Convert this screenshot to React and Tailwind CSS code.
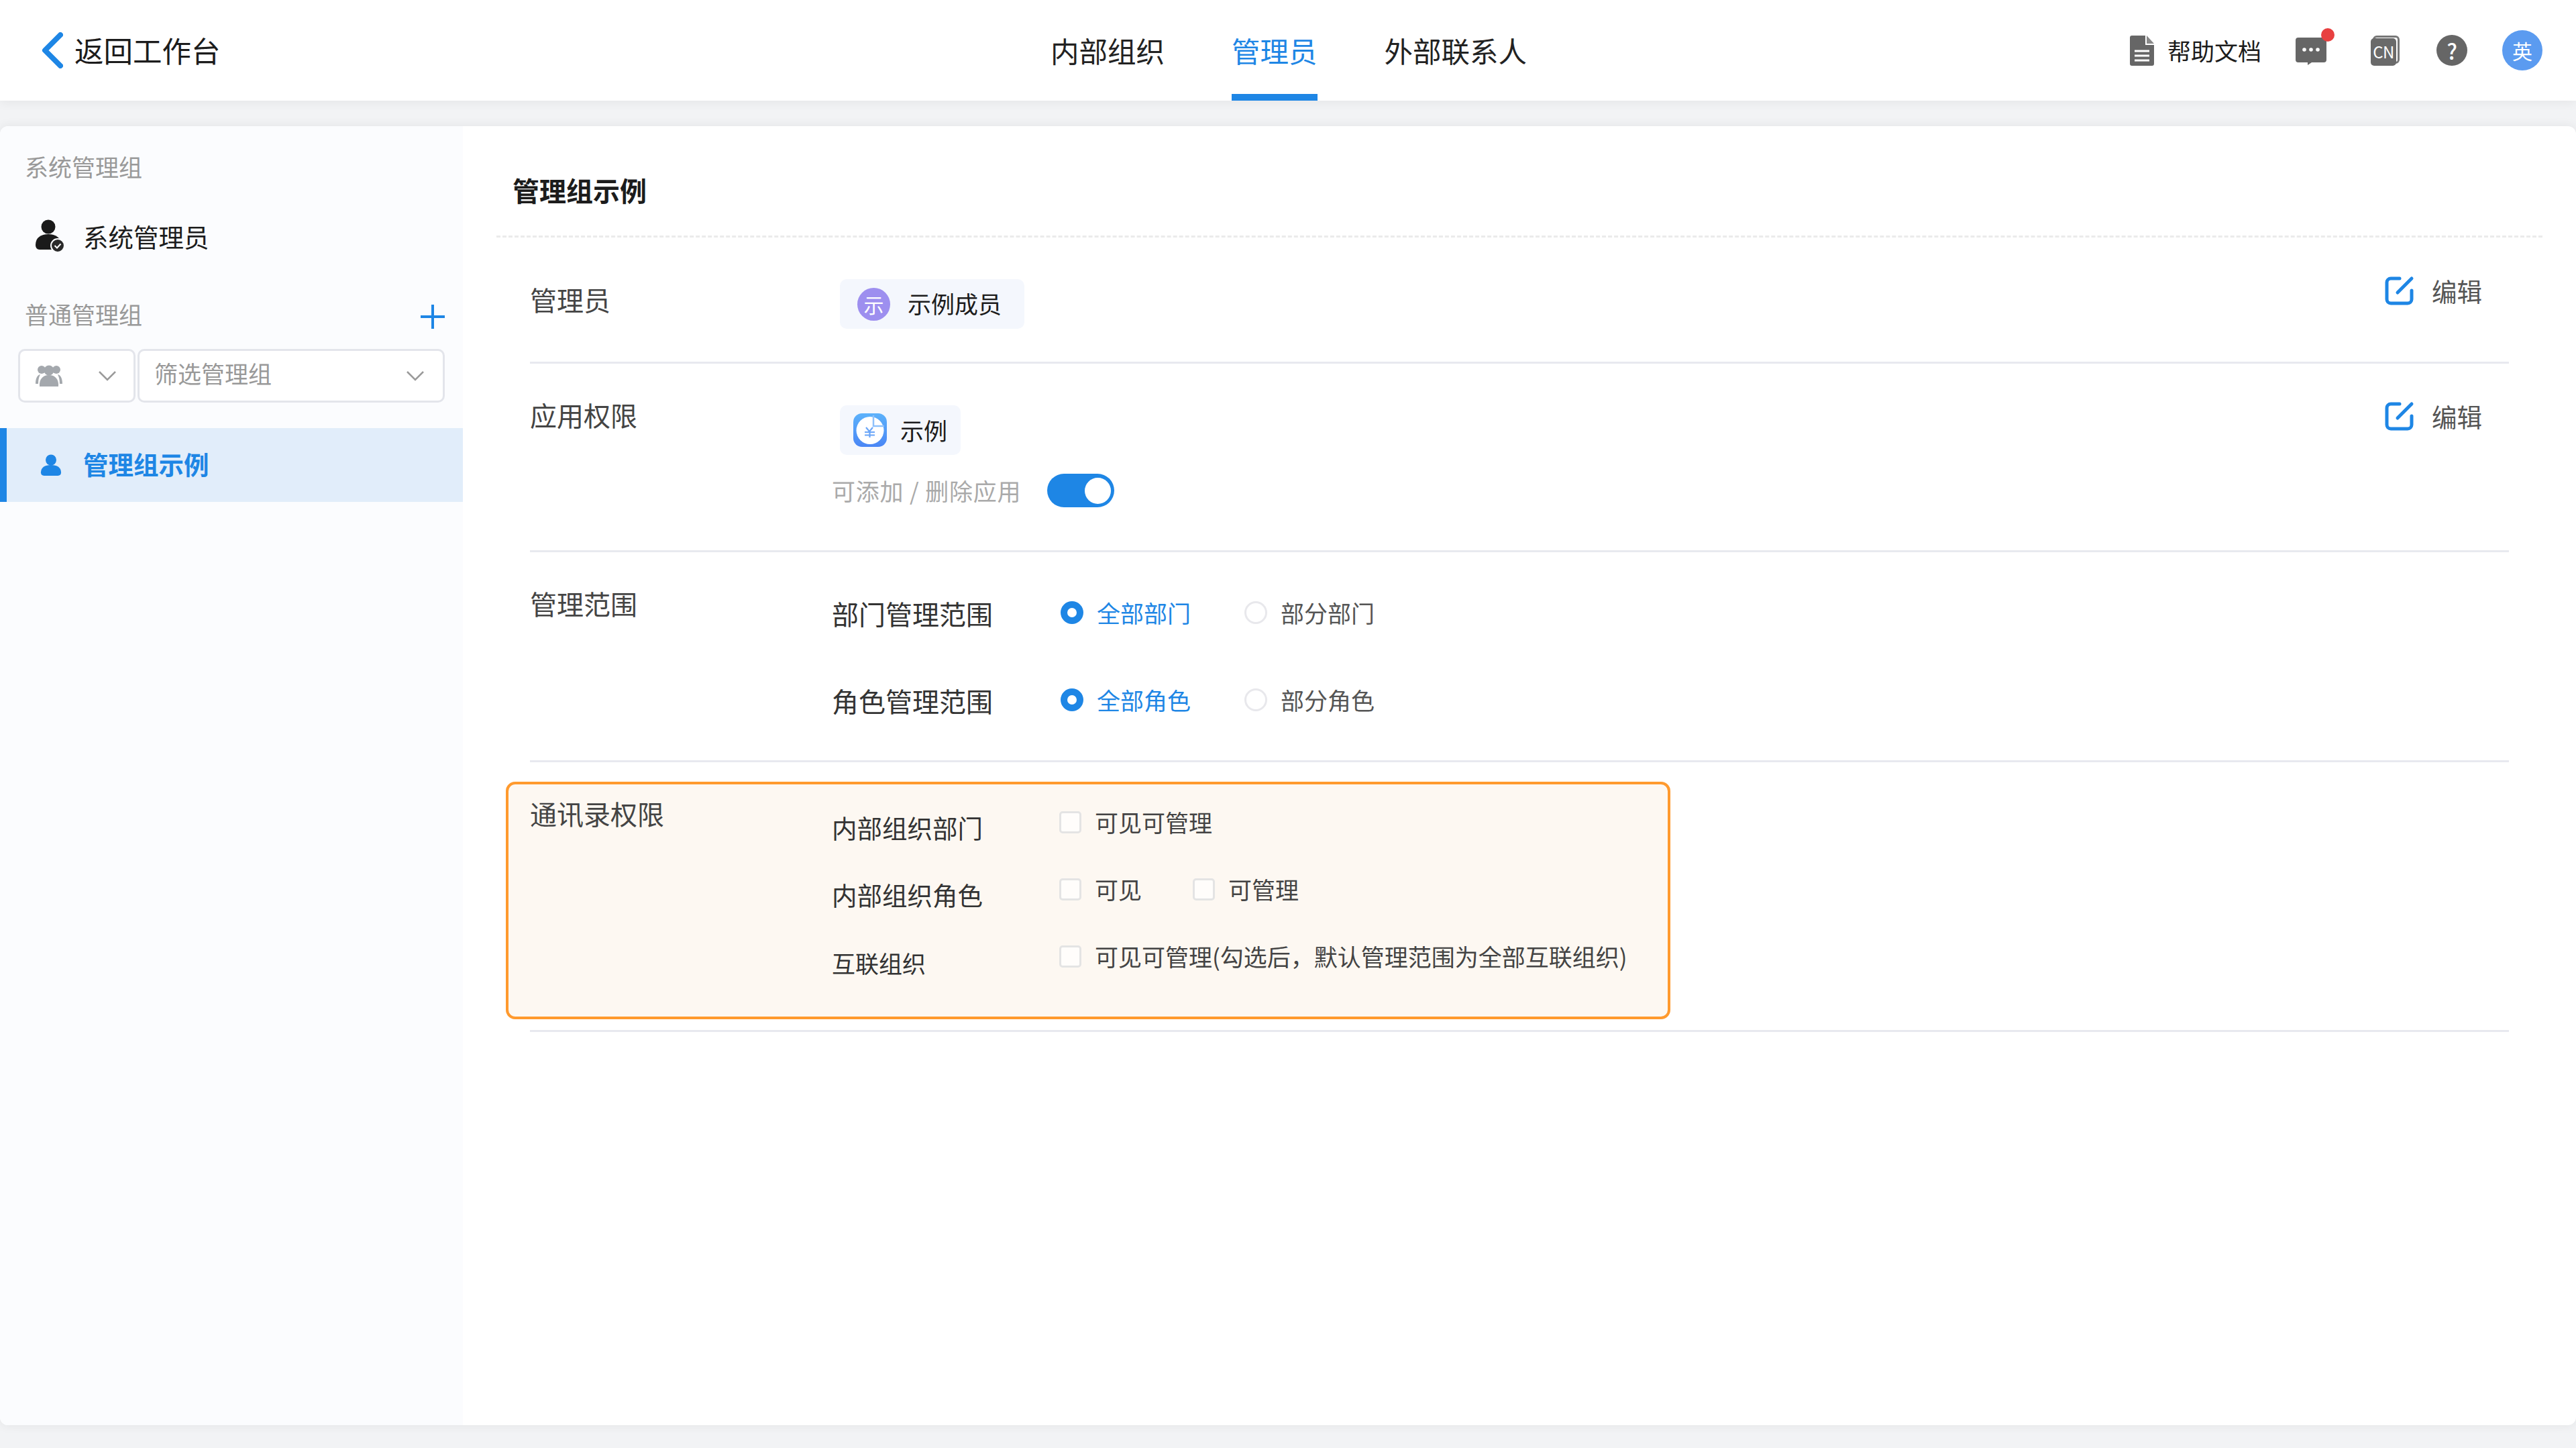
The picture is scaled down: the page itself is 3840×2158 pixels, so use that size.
import React from "react";

const font = { fontFamily: '"Noto Sans CJK SC", "Noto Sans", sans-serif' };

function Radio({ on, label }) {
  return (
    <div className="flex items-center gap-[20px]">
      {on ? (
        <span className="w-[34px] h-[34px] rounded-full bg-[#1e86e5] flex items-center justify-center">
          <span className="w-[14px] h-[14px] rounded-full bg-white" />
        </span>
      ) : (
        <span className="w-[34px] h-[34px] rounded-full bg-white border-[3px] border-[#e8e8ec]" />
      )}
      <span className={on ? "text-[35px] leading-[60px] text-[#1e86e5]" : "text-[35px] leading-[60px] text-[#555555]"}>{label}</span>
    </div>
  );
}

function Check({ label }) {
  return (
    <div className="flex items-center gap-[20px] h-[60px]">
      <span className="w-[33px] h-[33px] rounded-[5px] bg-[#fffdfb] border-[3px] border-[#e4e4e4]" />
      <span className="text-[35px] leading-[60px] text-[#444444]">{label}</span>
    </div>
  );
}

function EditBtn({ offset }) {
  return (
    <div className={"self-start flex items-center gap-[26px] text-[37.5px] leading-[60px] text-[#555555] " + offset}>
      <svg width="44" height="44" viewBox="0 0 44 44" fill="none" stroke="#1e86e5" strokeWidth="5" strokeLinecap="round">
        <path d="M22 4H9a6 6 0 0 0-6 6v25a6 6 0 0 0 6 6h25a6 6 0 0 0 6-6V22" />
        <path d="M19 25L40 4" />
      </svg>
      编辑
    </div>
  );
}

function PersonIcon({ color, size }) {
  return (
    <svg width={size} height={size} viewBox="0 0 32 34" fill={color}>
      <circle cx="16" cy="9" r="8.5" />
      <path d="M0 29c0-8 6-12 16-12s16 4 16 12c0 3-2 5-5 5H5c-3 0-5-2-5-5z" />
    </svg>
  );
}

function Chevron() {
  return (
    <svg width="26" height="16" viewBox="0 0 26 16" fill="none" stroke="#9a9a9a" strokeWidth="2.5">
      <path d="M1 2l12 12L25 2" />
    </svg>
  );
}

export default function App() {
  return (
    <div style={font} className="w-[3840px] h-[2158px] bg-[#f2f3f5] flex flex-col overflow-hidden">
      {/* header */}
      <div className="h-[150px] shrink-0 bg-white flex items-center shadow-[0_4px_14px_rgba(0,0,0,0.05)] relative z-10">
        <div className="flex-1 flex items-center pl-[62px]">
          <svg width="32" height="54" viewBox="0 0 32 54" fill="none" stroke="#1e86e5" strokeWidth="8" strokeLinecap="round" strokeLinejoin="round">
            <path d="M28 4L5 27l23 23" />
          </svg>
          <span className="ml-[17px] text-[43.5px] text-[#1c1c1c]">返回工作台</span>
        </div>

        <div className="flex h-full -ml-[10px] gap-[100px] text-[42.5px] text-[#222222]">
          <div className="flex items-center">内部组织</div>
          <div className="flex items-center text-[#1e86e5] border-b-[10px] border-[#1e86e5]">
            <span className="mt-[10px]">管理员</span>
          </div>
          <div className="flex items-center">外部联系人</div>
        </div>

        <div className="flex-1 flex items-center justify-end pr-[50px]">
          <svg width="36" height="45" viewBox="0 0 36 45">
            <path d="M3 0h20v14h13v28a3 3 0 0 1-3 3H3a3 3 0 0 1-3-3V3a3 3 0 0 1 3-3z" fill="#666666" />
            <path d="M25 0l11 12H25z" fill="#888888" />
            <path d="M7 23h22M7 30h22M7 37h22" stroke="#ffffff" strokeWidth="3" />
          </svg>
          <span className="ml-[20px] text-[35px] text-[#1c1c1c]">帮助文档</span>

          <div className="ml-[51px] mt-[2px] relative w-[46px] h-[41px]">
            <svg width="46" height="41" viewBox="0 0 46 41">
              <path d="M4 0h38a4 4 0 0 1 4 4v29a4 4 0 0 1-4 4H24l-6 4v-4H4a4 4 0 0 1-4-4V4a4 4 0 0 1 4-4z" fill="#666666" />
              <circle cx="13" cy="18" r="2.8" fill="#fff" />
              <circle cx="23" cy="18" r="2.8" fill="#fff" />
              <circle cx="33" cy="18" r="2.8" fill="#fff" />
            </svg>
            <span className="absolute -top-[14px] -right-[12px] w-[20px] h-[20px] rounded-full bg-[#e84040]" />
          </div>

          <div className="ml-[66px] relative w-[43px] h-[45px]">
            <span className="absolute top-0 left-[3px] w-[40px] h-[42px] rounded-[6px] border-[3px] border-[#777777]" />
            <span className="absolute left-0 bottom-0 w-[38px] h-[41px] rounded-[5px] bg-[#6a6a6a] flex items-center justify-center text-[24px] leading-none tracking-tight text-white">CN</span>
          </div>

          <div className="ml-[55px] w-[46px] h-[46px] rounded-full bg-[#666666] flex items-center justify-center text-[32px] leading-none font-medium text-white">?</div>

          <div className="ml-[52px] w-[60px] h-[60px] rounded-full bg-[#5b9bf0] flex items-center justify-center text-[30px] leading-none text-white">英</div>
        </div>
      </div>

      {/* card */}
      <div className="flex-1 mt-[38px] mb-[34px] flex rounded-[12px] overflow-hidden bg-white shadow-[0_0_16px_rgba(0,0,0,0.07)]">
        <div className="w-[690px] shrink-0 bg-[#fbfcfe] flex flex-col pt-[30px]">
          <div className="pl-[37px] text-[35px] leading-[60px] text-[#999999]">系统管理组</div>
          <div className="mt-[44px] pl-[53px] flex items-center h-[60px]">
            <div className="relative w-[44px] h-[50px]">
              <svg width="38" height="46" viewBox="0 0 38 46" fill="#1a1a1a">
                <circle cx="19" cy="11" r="10.5" />
                <path d="M0 38c0-11 8-16 19-16s19 5 19 16c0 4-2 7-6 7H6c-4 0-6-3-6-7z" />
              </svg>
              <svg className="absolute right-0 bottom-0" width="22" height="22" viewBox="0 0 22 22">
                <circle cx="11" cy="11" r="10" fill="#2a2a2a" stroke="#fbfcfe" strokeWidth="2" />
                <path d="M6.5 11l3.5 3.5 5.500-6" fill="none" stroke="#fff" strokeWidth="2" />
              </svg>
            </div>
            <span className="ml-[27px] text-[37.5px] leading-[60px] text-[#1c1c1c]">系统管理员</span>
          </div>

          <div className="mt-[56px] pl-[37px] pr-[27px] flex items-center justify-between h-[60px]">
            <span className="text-[35px] text-[#999999]">普通管理组</span>
            <svg className="mt-[8px]" width="36" height="36" viewBox="0 0 36 36" stroke="#1e86e5" strokeWidth="4">
              <path d="M18 0v36M0 18h36" />
            </svg>
          </div>

          <div className="mt-[22px] pl-[27px] pr-[27px] flex gap-[3px]">
            <div className="w-[175px] h-[80px] bg-white border-[3px] border-[#e3e5eb] rounded-[10px] flex items-center justify-between pl-[23px] pr-[26px]">
              <svg width="40" height="32" viewBox="0 0 40 32" fill="#a4a8ad">
                <circle cx="20" cy="8" r="7.500" />
                <path d="M6 32c-1-11 5-17 14-17s15 6 14 17z" />
                <circle cx="9" cy="7" r="6" />
                <circle cx="31" cy="7" r="6" />
                <path d="M0 28c0-9 3-13 7-14-2 4-3 8-3 14zM40 28c0-9-3-13-7-14 2 4 3 8 3 14z" />
              </svg>
              <Chevron />
            </div>
            <div className="flex-1 h-[80px] bg-white border-[3px] border-[#e3e5eb] rounded-[10px] flex items-center justify-between pl-[22px] pr-[28px]">
              <span className="text-[35px] leading-[60px] -mt-[8px] text-[#999999]">筛选管理组</span>
              <Chevron />
            </div>
          </div>

          <div className="mt-[38px] h-[110px] bg-[#e1edfa] border-l-[10px] border-[#1e86e5] flex items-center pl-[50px]">
            <PersonIcon color="#1e86e5" size={32} />
            <span className="ml-[32px] text-[37.5px] font-bold text-[#1e86e5] -mt-[3px]">管理组示例</span>
          </div>
        </div>

        {/* main */}
        <div className="flex-1 flex flex-col">
          <div className="mx-[50px] h-[166px] border-b-[3px] border-dashed border-[#ebebeb] pl-[24px] pt-[65px]">
            <div className="text-[40px] leading-[60px] font-bold text-[#1c1c1c]">管理组示例</div>
          </div>

          <div className="mx-[100px] flex flex-col">
            {/* admin */}
            <div className="h-[188px] border-b-[3px] border-[#e8e9ef] flex pt-[62px] pr-[40px]">
              <div className="w-[450px] text-[40px] leading-[60px] text-[#444444]">管理员</div>
              <div className="flex-1 pl-[12px]">
                <div className="inline-flex items-center h-[74px] rounded-[10px] bg-[#f4f7fd] pl-[26px] pr-[34px]">
                  <span className="w-[49px] h-[49px] rounded-full bg-[#9d8fef] flex items-center justify-center text-[30px] leading-none text-white">示</span>
                  <span className="ml-[26px] text-[35px] -mt-[2px] text-[#1c1c1c]">示例成员</span>
                </div>
              </div>
              <EditBtn offset="-mt-[13px]" />
            </div>

            {/* app permission */}
            <div className="h-[281px] border-b-[3px] border-[#e8e9ef] flex pt-[46px] pr-[40px]">
              <div className="w-[450px] text-[40px] leading-[60px] text-[#444444]">应用权限</div>
              <div className="flex-1 pt-[16px]">
                <div className="ml-[12px] inline-flex items-center h-[74px] rounded-[10px] bg-[#f4f7fd] pl-[20px] pr-[20px]">
                  <svg width="50" height="50" viewBox="0 0 50 50">
                    <defs>
                      <linearGradient id="appBg" x1="0" y1="0" x2="0" y2="1">
                        <stop offset="0" stopColor="#5cb2fb" />
                        <stop offset="1" stopColor="#4a86f5" />
                      </linearGradient>
                    </defs>
                    <rect width="50" height="50" rx="13" fill="url(#appBg)" />
                    <circle cx="25" cy="25.500" r="20.500" fill="#ffffff" />
                    <path d="M30 3v16h16" fill="none" stroke="#8fc1fb" strokeWidth="2.500" />
                    <path d="M19 21l5 6 5-6M17 28h15M17 32.500h15M24.500 27v9" fill="none" stroke="#6ba6f8" strokeWidth="2.200" />
                  </svg>
                  <span className="ml-[20px] text-[35px] text-[#1c1c1c]">示例</span>
                </div>
                <div className="mt-[28px] flex items-center">
                  <span className="text-[35px] tracking-[0.8px] leading-[50px] text-[#aaaaaa]">可添加 / 删除应用</span>
                  <div className="ml-[39px] w-[100px] h-[50px] rounded-full bg-[#1e86e5] flex items-center justify-end pr-[5px]">
                    <span className="w-[39px] h-[39px] rounded-full bg-white" />
                  </div>
                </div>
              </div>
              <EditBtn offset="mt-[2px]" />
            </div>

            {/* scope */}
            <div className="h-[313px] border-b-[3px] border-[#e8e9ef] flex pt-[46px]">
              <div className="w-[450px] text-[40px] leading-[60px] text-[#444444]">管理范围</div>
              <div className="flex flex-col gap-[70px] pt-[15px]">
                <div className="flex items-center h-[60px]">
                  <span className="w-[341px] text-[40px] leading-[60px] text-[#333333]">部门管理范围</span>
                  <div className="flex gap-[80px] -mt-[2px]">
                    <Radio on label="全部部门" />
                    <Radio label="部分部门" />
                  </div>
                </div>
                <div className="flex items-center h-[60px]">
                  <span className="w-[341px] text-[40px] leading-[60px] text-[#333333]">角色管理范围</span>
                  <div className="flex gap-[80px] -mt-[2px]">
                    <Radio on label="全部角色" />
                    <Radio label="部分角色" />
                  </div>
                </div>
              </div>
            </div>

            {/* contacts, highlighted box */}
            <div className="pt-[29px] pb-[16px] border-b-[3px] border-[#e8e9ef]">
              <div className="-ml-[36px] w-[1736px] h-[354px] rounded-[14px] border-[4px] border-[#ff9a2e] bg-[#fdf8f2] flex pl-[32px] pt-[13px]">
                <div className="w-[450px] text-[40px] leading-[60px] text-[#444444]">通讯录权限</div>
                <div className="flex flex-col gap-[40px] pt-[13px]">
                  <div className="flex h-[60px]">
                    <span className="w-[339px] text-[37.5px] leading-[60px] text-[#333333] pt-[8px]">内部组织部门</span>
                    <Check label="可见可管理" />
                  </div>
                  <div className="flex h-[60px]">
                    <span className="w-[339px] text-[37.5px] leading-[60px] text-[#333333] pt-[8px]">内部组织角色</span>
                    <div className="flex gap-[76px]">
                      <Check label="可见" />
                      <Check label="可管理" />
                    </div>
                  </div>
                  <div className="flex h-[60px]">
                    <span className="w-[339px] text-[35px] leading-[60px] text-[#333333] pt-[10px]">互联组织</span>
                    <Check label="可见可管理(勾选后，默认管理范围为全部互联组织)" />
                  </div>
                </div>
              </div>
            </div>
          </div>
        </div>
      </div>
    </div>
  );
}
